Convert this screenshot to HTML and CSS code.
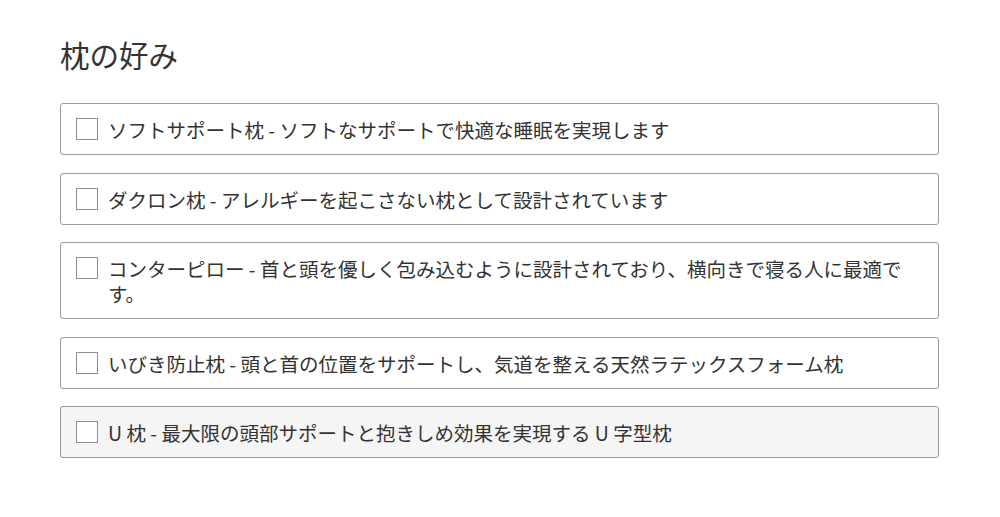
FILE: index.html
```html
<!DOCTYPE html>
<html lang="ja">
<head>
<meta charset="utf-8">
<title>枕の好み</title>
<link rel="stylesheet" href="styles.css">
</head>
<body>
<div class="page">
  <h1 class="title">枕の好み</h1>
  <div class="options">
    <label class="option"><span class="box"></span><span class="text">ソフトサポート枕 - ソフトなサポートで快適な睡眠を実現します</span></label>
    <label class="option"><span class="box"></span><span class="text">ダクロン枕 - アレルギーを起こさない枕として設計されています</span></label>
    <label class="option"><span class="box"></span><span class="text">コンターピロー - 首と頭を優しく包み込むように設計されており、横向きで寝る人に最適です。</span></label>
    <label class="option"><span class="box"></span><span class="text">いびき防止枕 - 頭と首の位置をサポートし、気道を整える天然ラテックスフォーム枕</span></label>
    <label class="option hover"><span class="box"></span><span class="text">U 枕 - 最大限の頭部サポートと抱きしめ効果を実現する U 字型枕</span></label>
  </div>
</div>
</body>
</html>
```

FILE: styles.css
```css
html, body {
  margin: 0;
  padding: 0;
  background: #ffffff;
}
body {
  font-family: "Noto Sans CJK JP", "Noto Sans", sans-serif;
  color: #333333;
}
.page {
  padding: 0 61px 0 60px;
}
.title {
  font-size: 29.5px;
  font-weight: 400;
  line-height: 40px;
  margin: 0;
  padding-top: 34px;
  color: #333333;
}
.options {
  display: flex;
  flex-direction: column;
  gap: 17.5px;
  margin-top: 29px;
}
.option {
  display: flex;
  align-items: flex-start;
  gap: 10px;
  border: 1px solid #9a9a9a;
  border-radius: 3px;
  padding: 13px 15px 12px 15px;
  background: #ffffff;
}
.option.hover {
  background: #f5f5f5;
}
.box {
  flex: 0 0 auto;
  width: 20px;
  height: 20px;
  margin-top: 1px;
  border: 1.5px solid #8f8f8f;
  background: #ffffff;
}
.text {
  font-size: 19.5px;
  line-height: 25px;
  padding-right: 8px;
}
```
